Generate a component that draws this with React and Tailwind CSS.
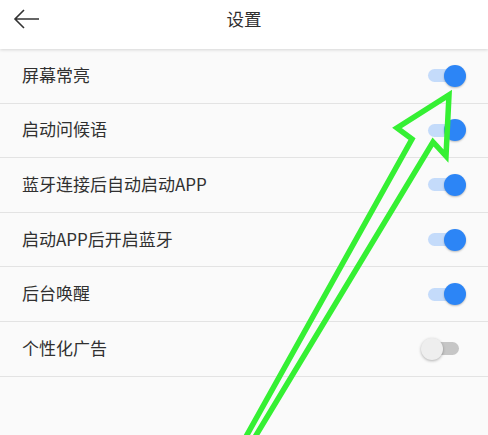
import React from 'react';

const items = [
  { label: '屏幕常亮', on: true },
  { label: '启动问候语', on: true },
  { label: '蓝牙连接后自动启动APP', on: true },
  { label: '启动APP后开启蓝牙', on: true },
  { label: '后台唤醒', on: true },
  { label: '个性化广告', on: false },
];

const Toggle = ({ on }) => {
  if (on) {
    return (
      <div className="relative w-[38px] h-[22px] mr-[22px]">
        <div className="absolute left-0 right-[1px] top-[4.5px] h-[13px] rounded-full bg-[#c4dbfa]" />
        <div className="absolute right-0 top-0 w-[22px] h-[22px] rounded-full bg-[#2c85f6] shadow-[0_1px_2px_rgba(0,0,0,0.25)]" />
      </div>
    );
  }
  return (
    <div className="relative w-[38px] h-[22px] mr-[29px]">
      <div className="absolute left-[2px] right-0 top-[4.5px] h-[13px] rounded-full bg-[#c6c6c6]" />
      <div className="absolute left-0 top-0 w-[22px] h-[22px] rounded-full bg-[#eeeeee] shadow-[0_1px_3px_rgba(0,0,0,0.3)]" />
    </div>
  );
};

export default function App() {
  return (
    <div
      className="relative w-[488px] h-[435px] overflow-hidden bg-[#fafafa] text-[#303030]"
      style={{ fontFamily: '"Noto Sans CJK SC", "Noto Sans", sans-serif' }}
    >
      <div className="relative z-10 h-[49px] bg-white flex items-center shadow-[0_1px_3px_rgba(0,0,0,0.15)]">
        <svg className="absolute left-[13px] top-[8px]" width="28" height="22" viewBox="0 0 28 22">
          <path d="M2 11 H26 M11 2 L2 11 L11 20" fill="none" stroke="#333" strokeWidth="1.6" />
        </svg>
        <div className="w-full text-center text-[17.5px] leading-none -mt-[12px]">设置</div>
      </div>

      <div>
        {items.map((it) => (
          <div
            key={it.label}
            className="h-[54.6px] border-b border-[#e3e3e3] flex items-center justify-between pl-[22px]"
          >
            <span className="text-[17px] leading-none -mt-[3px]">{it.label}</span>
            <Toggle on={it.on} />
          </div>
        ))}
      </div>

      <svg className="absolute inset-0 z-20 pointer-events-none" width="488" height="435" viewBox="0 0 488 435">
        <polyline
          points="243,442 412,139 397,128 449,95 446,156 433,142 252,442"
          fill="none"
          stroke="#35f033"
          strokeWidth="5.5"
          strokeLinejoin="miter"
        />
      </svg>
    </div>
  );
}
